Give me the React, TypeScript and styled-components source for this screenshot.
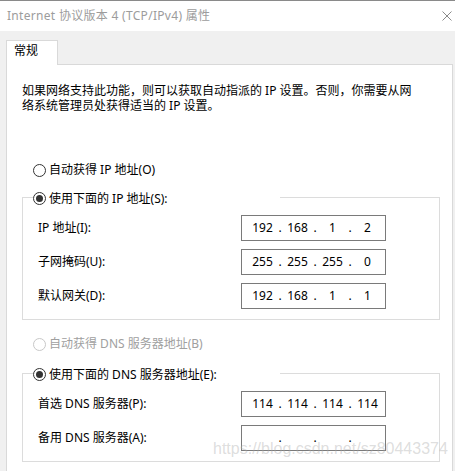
import React from 'react';
import styled, { createGlobalStyle } from 'styled-components';

const GlobalStyle = createGlobalStyle`
  html, body {
    margin: 0;
    padding: 0;
    background: #fff;
  }
  body {
    font-family: "Noto Sans", "Noto Sans CJK SC", sans-serif;
    font-size: 12px;
    color: #000;
  }
  * {
    box-sizing: border-box;
  }
`;

const Window = styled.div`
  position: relative;
  width: 455px;
  height: 471px;
  overflow: hidden;
  display: flex;
  flex-direction: column;
`;

const TitleBar = styled.header`
  height: 31px;
  flex: none;
  border-top: 1px solid #8a8a8a;
  background: #fff;
  display: flex;
  align-items: center;
  justify-content: space-between;
  padding: 0 3px 0 7px;
`;

const Title = styled.span`
  color: #9c9c9c;
  line-height: 16px;
  letter-spacing: 0.3px;
`;

const Body = styled.main`
  flex: 1;
  display: flex;
  flex-direction: column;
  background: #f0f0f0;
  padding: 9px 2px 0 6px;
`;

const TabStrip = styled.div`
  display: flex;
`;

const Tab = styled.div`
  position: relative;
  z-index: 1;
  width: 52px;
  height: 25px;
  margin-bottom: -1px;
  padding-left: 7px;
  line-height: 20px;
  background: #fff;
  border: 1px solid #d9d9d9;
  border-bottom: none;
`;

const Panel = styled.section`
  flex: 1;
  background: #fff;
  border: 1px solid #d9d9d9;
  border-bottom: none;
  padding-top: 18px;
`;

const Description = styled.p`
  margin: 0 12px 0 15px;
  max-width: 395px;
  line-height: 15px;
`;

const RadioRow = styled.div<{ $top: number }>`
  margin: ${(p) => p.$top}px 0 0 26px;
  height: 16px;
`;

const RadioLabel = styled.span<{ $disabled?: boolean }>`
  display: inline-flex;
  align-items: center;
  gap: 3px;
  height: 16px;
  line-height: 16px;
  white-space: nowrap;
  color: ${(p) => (p.$disabled ? '#a0a0a0' : '#000')};
`;

const RadioCircle = styled.span<{ $checked?: boolean; $disabled?: boolean }>`
  width: 13px;
  height: 13px;
  flex: none;
  border-radius: 50%;
  border: 1px solid ${(p) => (p.$disabled ? '#c8c8c8' : '#333')};
  background: #fff;
  display: flex;
  align-items: center;
  justify-content: center;

  &::after {
    content: '';
    display: ${(p) => (p.$checked ? 'block' : 'none')};
    width: 7px;
    height: 7px;
    border-radius: 50%;
    background: #333;
  }
`;

const Group = styled.fieldset<{ $top: number }>`
  margin: ${(p) => p.$top}px 12px 0 15px;
  min-width: 0;
  border: 1px solid #dcdcdc;
  padding: 10px 0 10px 0;
`;

const GroupLegend = styled.legend`
  margin-left: 10px;
  padding: 0;
  width: 247px;
  height: 16px;
`;

const FieldGrid = styled.div`
  display: grid;
  grid-template-columns: 203px 145px;
  row-gap: 8px;
  align-items: center;
  padding-left: 15px;
`;

const FieldLabel = styled.label`
  line-height: 16px;
  white-space: nowrap;
`;

const IpBox = styled.div`
  width: 145px;
  height: 26px;
  border: 1px solid #7a7a7a;
  padding-left: 6px;
  display: grid;
  grid-template-columns: 29px 6px 29px 6px 29px 6px 29px;
  align-items: center;
  line-height: 24px;
  background: #fff;
`;

const Octet = styled.span`
  text-align: center;
`;

const Dot = styled.span`
  text-align: center;
`;

const Watermark = styled.span`
  position: absolute;
  left: 213px;
  top: 441px;
  font-family: "Liberation Sans", Arial, sans-serif;
  font-size: 16px;
  line-height: 16px;
  color: rgba(170, 170, 170, 0.4);
  white-space: nowrap;
  pointer-events: none;
`;

const Radio: React.FC<{ label: string; checked?: boolean; disabled?: boolean }> = ({
  label,
  checked,
  disabled,
}) => (
  <RadioLabel $disabled={disabled}>
    <RadioCircle $checked={checked} $disabled={disabled} />
    {label}
  </RadioLabel>
);

const IpField: React.FC<{ value: string[] }> = ({ value }) => (
  <IpBox>
    {value.map((octet, i) => (
      <React.Fragment key={i}>
        {i > 0 && <Dot>.</Dot>}
        <Octet>{octet}</Octet>
      </React.Fragment>
    ))}
  </IpBox>
);

const ipRows = [
  { label: 'IP 地址(I):', value: ['192', '168', '1', '2'] },
  { label: '子网掩码(U):', value: ['255', '255', '255', '0'] },
  { label: '默认网关(D):', value: ['192', '168', '1', '1'] },
];

const dnsRows = [
  { label: '首选 DNS 服务器(P):', value: ['114', '114', '114', '114'] },
  { label: '备用 DNS 服务器(A):', value: ['', '', '', ''] },
];

const App: React.FC = () => {
  return (
    <>
      <GlobalStyle />
      <Window>
        <TitleBar>
          <Title>Internet 协议版本 4 (TCP/IPv4) 属性</Title>
          <svg width="10" height="10" viewBox="0 0 10 10">
            <path d="M0.5 0.5 L9.5 9.5 M9.5 0.5 L0.5 9.5" stroke="#8a8a8a" strokeWidth="1" />
          </svg>
        </TitleBar>
        <Body>
          <TabStrip>
            <Tab>常规</Tab>
          </TabStrip>
          <Panel>
            <Description>
              如果网络支持此功能，则可以获取自动指派的 IP 设置。否则，你需要从网络系统管理员处获得适当的 IP 设置。
            </Description>

            <RadioRow $top={49}>
              <Radio label="自动获得 IP 地址(O)" />
            </RadioRow>
            <Group $top={11}>
              <GroupLegend>
                <Radio label="使用下面的 IP 地址(S):" checked />
              </GroupLegend>
              <FieldGrid>
                {ipRows.map((row) => (
                  <React.Fragment key={row.label}>
                    <FieldLabel>{row.label}</FieldLabel>
                    <IpField value={row.value} />
                  </React.Fragment>
                ))}
              </FieldGrid>
            </Group>

            <RadioRow $top={16}>
              <Radio label="自动获得 DNS 服务器地址(B)" disabled />
            </RadioRow>
            <Group $top={13}>
              <GroupLegend>
                <Radio label="使用下面的 DNS 服务器地址(E):" checked />
              </GroupLegend>
              <FieldGrid>
                {dnsRows.map((row) => (
                  <React.Fragment key={row.label}>
                    <FieldLabel>{row.label}</FieldLabel>
                    <IpField value={row.value} />
                  </React.Fragment>
                ))}
              </FieldGrid>
            </Group>
          </Panel>
        </Body>
        <Watermark>https://blog.csdn.net/sz80443374</Watermark>
      </Window>
    </>
  );
};

export default App;
